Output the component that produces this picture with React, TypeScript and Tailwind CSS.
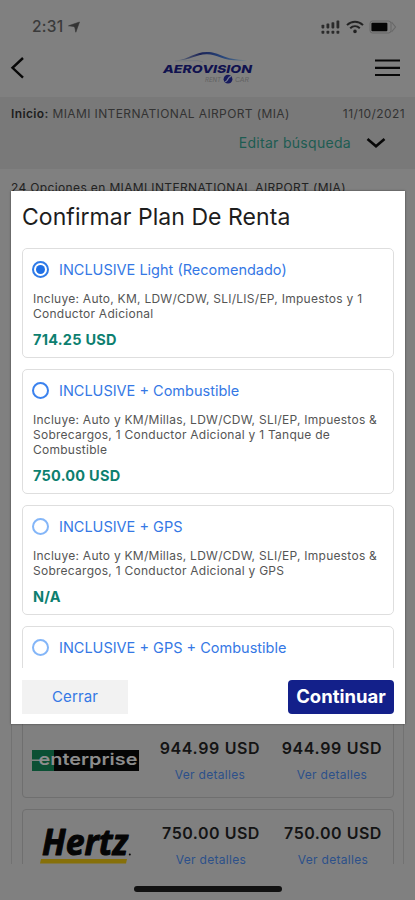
import React, { useState } from 'react';

interface Plan {
  id: string;
  name: string;
  lines: string[];
  price: string;
  ring: string;
  height: string;
}

const plans: Plan[] = [
  {
    id: 'light',
    name: 'INCLUSIVE Light (Recomendado)',
    lines: ['Incluye: Auto, KM, LDW/CDW, SLI/LIS/EP, Impuestos y 1', 'Conductor Adicional'],
    price: '714.25 USD',
    ring: 'border-[#2f7be8]',
    height: 'h-[110px]',
  },
  {
    id: 'fuel',
    name: 'INCLUSIVE + Combustible',
    lines: [
      'Incluye: Auto y KM/Millas, LDW/CDW, SLI/EP, Impuestos &',
      'Sobrecargos, 1 Conductor Adicional y 1 Tanque de',
      'Combustible',
    ],
    price: '750.00 USD',
    ring: 'border-[#3b82ee]',
    height: 'h-[125px]',
  },
  {
    id: 'gps',
    name: 'INCLUSIVE + GPS',
    lines: [
      'Incluye: Auto y KM/Millas, LDW/CDW, SLI/EP, Impuestos &',
      'Sobrecargos, 1 Conductor Adicional y GPS',
    ],
    price: 'N/A',
    ring: 'border-[#84b6f8]',
    height: 'h-[110px]',
  },
  {
    id: 'gps-fuel',
    name: 'INCLUSIVE + GPS + Combustible',
    lines: [],
    price: '',
    ring: 'border-[#84b6f8]',
    height: 'h-[125px]',
  },
];

function StatusBar() {
  return (
    <div className="flex h-[54px] shrink-0 items-start justify-between pl-8 pr-[18px] pt-[18px]">
      <div className="flex items-center">
        <span className="text-[15.5px] font-medium leading-[18px] tracking-[0.3px] text-[#3a3a3a]">2:31</span>
        <svg className="ml-1 h-[12px] w-[12px]" viewBox="0 0 12 12">
          <path d="M0.5 4.8 L11.5 1 L7.8 11.2 L6.8 6.2 L5.4 5.4 Z" fill="#343434" stroke="#343434" strokeWidth="0.6" />
        </svg>
      </div>
      <div className="flex items-center pt-[1px]">
        <svg className="h-[16px] w-[20px]" viewBox="0 0 20 16" fill="#2b2b2b">
          <rect x="0.5" y="5.8" width="2.8" height="3.6" rx="0.8" />
          <rect x="5.5" y="4.6" width="2.8" height="4.8" rx="0.8" />
          <rect x="10.5" y="3.2" width="2.8" height="6.2" rx="0.8" />
          <rect x="15.5" y="1.6" width="2.8" height="7.8" rx="0.8" />
          <rect x="0.5" y="11.8" width="2.8" height="3" rx="0.8" />
          <rect x="5.5" y="11.8" width="2.8" height="3" rx="0.8" />
          <rect x="10.5" y="11.8" width="2.8" height="3" rx="0.8" />
          <rect x="15.5" y="11.8" width="2.8" height="3" rx="0.8" />
        </svg>
        <svg className="ml-[5px] h-[14px] w-[18px]" viewBox="0 0 18 14" fill="none" stroke="#222" strokeWidth="2">
          <path d="M1 5.1 C5.6 0.6 12.4 0.6 17 5.1" />
          <path d="M4.2 8.3 C7 5.6 11 5.6 13.8 8.3" />
          <circle cx="9" cy="11.4" r="1.1" fill="#222" strokeWidth="1.4" />
        </svg>
        <svg className="ml-[5px] h-[14px] w-[28px]" viewBox="0 0 28 14">
          <rect x="1" y="1" width="21" height="12" rx="2.5" fill="none" stroke="#666" />
          <rect x="2.4" y="2.8" width="16" height="8.4" rx="1" fill="#050505" />
          <path d="M22.5 2 L26.5 7 L22.5 12" fill="none" stroke="#686868" strokeWidth="1.2" />
        </svg>
      </div>
    </div>
  );
}

function AerovisionLogo() {
  return (
    <svg className="h-[36px] w-[94px]" viewBox="0 0 94 36">
      <defs>
        <linearGradient id="roof" x1="0" x2="1">
          <stop offset="0" stopColor="#68717c" />
          <stop offset="0.35" stopColor="#1c2457" />
          <stop offset="0.65" stopColor="#27457a" />
          <stop offset="1" stopColor="#5b7688" />
        </linearGradient>
      </defs>
      <path d="M14 10.4 C27 9.5 32 2 45 2 C58 2 61 10 85 10.2 C63 12.4 56 4.4 45 4.2 C34 4 29 10.2 14 10.4Z" fill="url(#roof)" />
      <path d="M13 11 L36 10.6 L41 12" fill="none" stroke="#6d737b" strokeWidth="0.8" />
      <text
        x="1" y="23.4" textLength="89" lengthAdjust="spacingAndGlyphs"
        fill="#10124f" fontSize="11" fontWeight="800" fontStyle="italic" fontFamily="Inter, sans-serif"
      >
        AEROVISION
      </text>
      <text x="43" y="31.8" textLength="16" lengthAdjust="spacingAndGlyphs" fill="#606060" fontSize="6.5" fontStyle="italic" fontFamily="Inter, sans-serif">RENT</text>
      <circle cx="66" cy="29.2" r="4.4" fill="#171b5c" />
      <path d="M63.2 32 C67 30.2 65 27.2 69 26.4" fill="none" stroke="#777d94" strokeWidth="1.2" />
      <text x="73" y="31.8" textLength="14" lengthAdjust="spacingAndGlyphs" fill="#606060" fontSize="6.5" fontStyle="italic" fontFamily="Inter, sans-serif">CAR</text>
    </svg>
  );
}

function Header() {
  return (
    <div className="flex h-[43px] shrink-0 items-start justify-between pl-[10px] pr-[14px]">
      <svg className="mt-[2px] h-[24px] w-[16px]" viewBox="0 0 16 24" fill="none" stroke="#080808" strokeWidth="2.4">
        <path d="M13 2 L2.5 11.8 L13 21.6" />
      </svg>
      <div className="-mt-[4px] ml-[17px]">
        <AerovisionLogo />
      </div>
      <svg className="mt-[3px] h-[22px] w-[27px]" viewBox="0 0 27 22" stroke="#080808" strokeWidth="2.2">
        <path d="M1 3.5 H26 M1 10.8 H26 M1 18 H26" />
      </svg>
    </div>
  );
}

function SearchSummary() {
  return (
    <div className="h-[72px] shrink-0 bg-[#797979] pl-[11px] pr-[10px] pt-[9px]">
      <div className="flex justify-between text-[12px] leading-[16px] text-[#333]">
        <p className="whitespace-nowrap tracking-[0.38px]">
          <span className="font-semibold text-[#1d1d1d]">Inicio:</span> MIAMI INTERNATIONAL AIRPORT (MIA)
        </p>
        <span className="tracking-[0.42px]">11/10/2021</span>
      </div>
      <div className="mt-[11px] flex items-center justify-end pr-[19px]">
        <span className="text-[14px] leading-[20px] tracking-[0.3px] text-[#1d5c52]">Editar búsqueda</span>
        <svg className="ml-[15px] h-[12px] w-[20px]" viewBox="0 0 20 12" fill="none" stroke="#080808" strokeWidth="2.6">
          <path d="M1.5 2 L10 9.2 L18.5 2" />
        </svg>
      </div>
    </div>
  );
}

function EnterpriseLogo() {
  return (
    <svg className="h-[21px] w-[107px]" viewBox="0 0 107 21">
      <rect width="107" height="21" fill="#050505" />
      <rect width="22" height="21" fill="#0b5034" />
      <path d="M0 10.2 H15" stroke="#8b8b8b" strokeWidth="1.4" />
      <text
        x="6.5" y="15" textLength="99" lengthAdjust="spacingAndGlyphs"
        fill="#8d8d8d" fontSize="16.5" fontWeight="600" fontFamily="Inter, sans-serif"
      >
        enterprise
      </text>
    </svg>
  );
}

function HertzLogo() {
  return (
    <svg className="h-[36px] w-[92px]" viewBox="0 0 92 36">
      <text
        x="2" y="27" textLength="86" lengthAdjust="spacingAndGlyphs"
        fill="#050505" stroke="#050505" strokeWidth="1" strokeLinejoin="round" fontSize="35" fontWeight="700" fontStyle="italic" fontFamily="'Open Sans', sans-serif"
      >
        Hertz
      </text>
      <circle cx="89.8" cy="26.6" r="1" fill="#050505" />
      <path d="M1 31 H87 L86 35.4 H0 Z" fill="#86700a" />
    </svg>
  );
}

interface ResultCardProps {
  logo: React.ReactNode;
  price: string;
  className: string;
  logoClass: string;
  priceClass: string;
}

function ResultCard({ logo, price, className, logoClass, priceClass }: ResultCardProps) {
  return (
    <div className={`flex h-[84px] shrink-0 rounded-[4px] border border-[#6f6f6f] ${className}`}>
      <div className={`shrink-0 ${logoClass}`}>{logo}</div>
      {[0, 1].map((col) => (
        <div key={col} className="flex w-[122px] shrink-0 flex-col items-center">
          <span className={`whitespace-nowrap text-[16px] font-semibold leading-[20px] text-[#141414] ${priceClass}`}>{price}</span>
          <a className="mt-[9px] whitespace-nowrap text-[12px] leading-[16px] tracking-[0.3px] text-[#2c508a]">Ver detalles</a>
        </div>
      ))}
    </div>
  );
}

function PlanOption({ plan, checked, onSelect }: { plan: Plan; checked: boolean; onSelect: () => void }) {
  return (
    <div onClick={onSelect} className={`shrink-0 rounded-[5px] border border-[#dedede] pl-[10px] pt-[11px] ${plan.height}`}>
      <div className="flex h-[20px] items-center">
        <span className={`-ml-px -mt-px flex h-[17px] w-[17px] items-center justify-center rounded-full border-2 ${plan.ring}`}>
          {checked && <span className="h-[9px] w-[9px] rounded-full bg-[#1f6fe5]" />}
        </span>
        <span className="ml-[10px] whitespace-nowrap text-[14.5px] leading-[20px] text-[#3578e5]">{plan.name}</span>
      </div>
      {plan.lines.length > 0 && (
        <>
          <div className="mt-[11px] whitespace-nowrap text-[12px] leading-[15px] tracking-[0.26px] text-[#555]">
            {plan.lines.map((line) => (
              <p key={line}>{line}</p>
            ))}
          </div>
          <p className="mt-[9px] text-[14.5px] font-bold leading-[20px] tracking-[0.25px] text-[#0d7f70]">{plan.price}</p>
        </>
      )}
    </div>
  );
}

export default function App() {
  const [selected, setSelected] = useState('light');

  return (
    <div className="relative flex h-[900px] w-[415px] flex-col overflow-hidden bg-[#808080] font-['Inter',sans-serif]">
      <StatusBar />
      <Header />
      <SearchSummary />

      <div className="flex h-[695px] shrink-0 flex-col overflow-hidden px-[11px]">
        <p className="pt-[10px] text-[12px] leading-[18px] tracking-[0.36px] text-[#222]">24 Opciones en MIAMI INTERNATIONAL AIRPORT (MIA)</p>
        <div className="mt-[10px] flex flex-1 flex-col justify-end gap-3 overflow-hidden border-x border-[#727272] pl-[10px] pr-[9px]">
          <ResultCard
            logo={<EnterpriseLogo />}
            price="944.99 USD"
            className="-mb-px pl-[9px] pt-[23px]"
            logoClass="w-[117px] pt-[12px]"
            priceClass="tracking-[0.65px]"
          />
          <ResultCard
            logo={<HertzLogo />}
            price="750.00 USD"
            className="-mb-[29px] pl-[17px] pt-[13px]"
            logoClass="w-[110px] pt-[5px]"
            priceClass="tracking-[0.5px]"
          />
        </div>
      </div>

      <div className="flex flex-1 justify-center pt-[22px]">
        <div className="h-[6px] w-[148px] rounded-full bg-[#111]" />
      </div>

      {/* Plan dialog */}
      <div className="absolute left-[11px] top-[191px] flex h-[533px] w-[394px] flex-col bg-white px-[11px] shadow-[0_0_2px_rgba(0,0,0,0.5)]">
        <h2 className="h-[57px] shrink-0 whitespace-nowrap pt-[12px] text-[23px] leading-[28px] tracking-[0.05px] text-[#1d1d1d]">Confirmar Plan De Renta</h2>
        <div className="flex h-[420px] shrink-0 flex-col gap-[11px] overflow-hidden">
          {plans.map((plan) => (
            <PlanOption key={plan.id} plan={plan} checked={selected === plan.id} onSelect={() => setSelected(plan.id)} />
          ))}
        </div>
        <div className="mt-[12px] flex justify-between">
          <button className="h-[34px] w-[106px] bg-[#f2f2f2] text-[15px] tracking-[0.15px] text-[#3578e5]">Cerrar</button>
          <button className="h-[34px] w-[106px] rounded-[4px] bg-[#13208a] text-[18.5px] font-bold text-white">Continuar</button>
        </div>
      </div>
    </div>
  );
}
